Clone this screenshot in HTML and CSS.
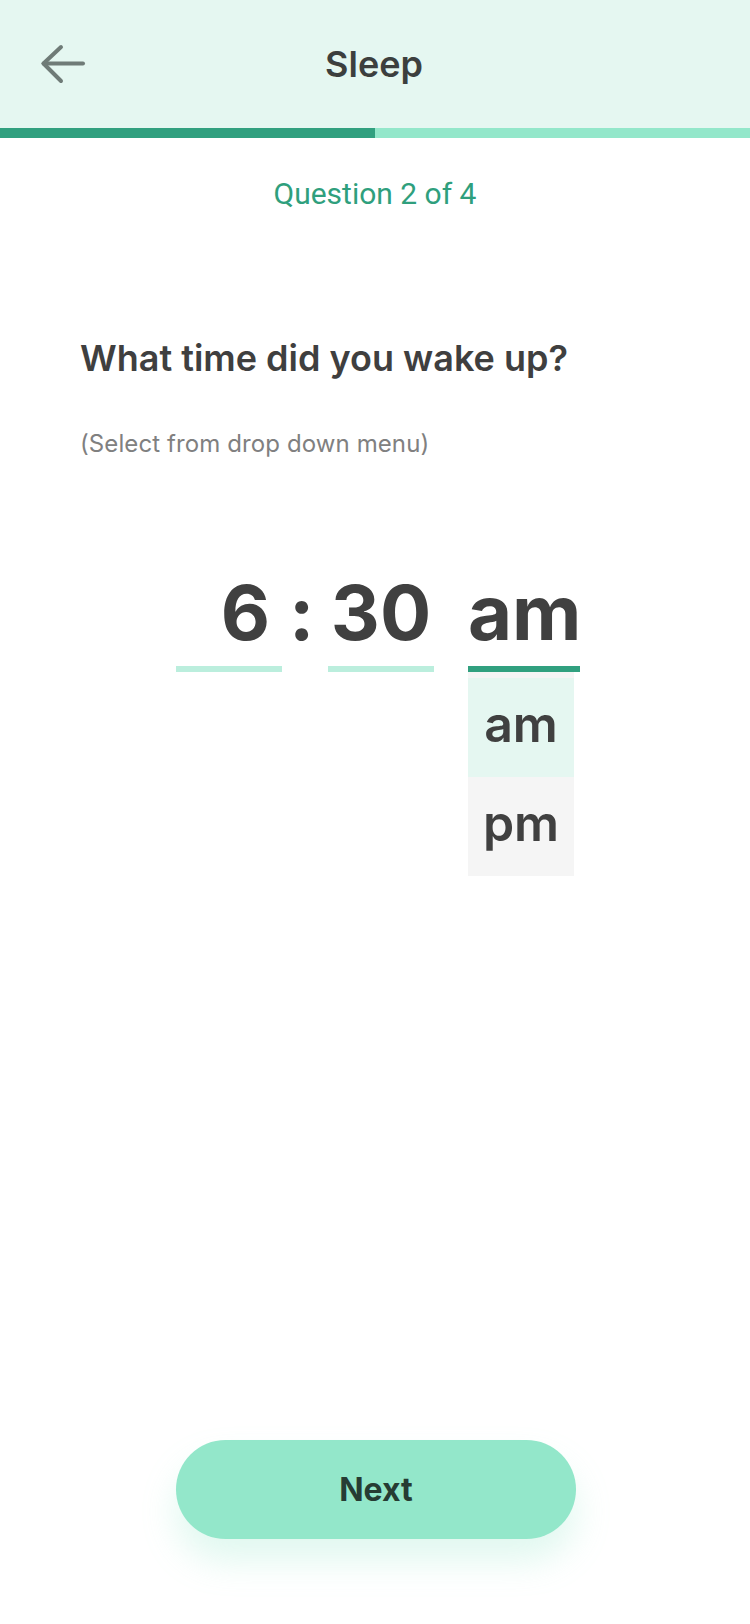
FILE: index.html
```html
<!DOCTYPE html>
<html lang="en">
<head>
<meta charset="utf-8">
<title>Sleep</title>
<link rel="stylesheet" href="styles.css">
</head>
<body>
<div class="screen">
  <header class="topbar">
    <button class="back" aria-label="Back">
      <svg width="46" height="40" viewBox="0 0 46 40" fill="none" stroke="#6f7b77" stroke-width="4" stroke-linecap="round" stroke-linejoin="round">
        <path d="M43 19.5H3.5"/>
        <path d="M21 3L3.5 19.5L21 37"/>
      </svg>
    </button>
    <h1 class="title">Sleep</h1>
    <span class="spacer"></span>
  </header>
  <div class="progress">
    <div class="progress-done"></div>
    <div class="progress-rest"></div>
  </div>

  <p class="counter">Question 2 of 4</p>

  <section class="question">
    <h2 class="q-title">What time did you wake up?</h2>
    <p class="q-hint">(Select from drop down menu)</p>
  </section>

  <div class="time-row">
    <div class="field field-hour">6</div>
    <span class="colon">:</span>
    <div class="field field-min">30</div>
    <div class="field field-ampm active">
      am
      <ul class="menu">
        <li class="opt selected">am</li>
        <li class="opt">pm</li>
      </ul>
    </div>
  </div>

  <div class="footer">
    <button class="next">Next</button>
  </div>
</div>
</body>
</html>
```

FILE: styles.css
```css
* { box-sizing: border-box; }

html, body {
  margin: 0;
  padding: 0;
  background: #ffffff;
}

body {
  font-family: Inter, "Noto Sans", "Liberation Sans", sans-serif;
  color: #3f3f3f;
}

.screen {
  display: flex;
  flex-direction: column;
  min-height: 1624px;
}

.topbar {
  height: 128px;
  background: #e5f7f1;
  display: grid;
  grid-template-columns: 1fr auto 1fr;
  align-items: center;
  padding-left: 40px;
}

.back {
  justify-self: start;
  display: flex;
  padding: 0;
  border: 0;
  background: none;
}

.title {
  margin: 0;
  font-size: 36px;
  line-height: 36px;
  font-weight: 600;
  color: #3c3f3e;
  position: relative;
  left: -21px;
}

.progress {
  display: flex;
  height: 10px;
}

.progress-done {
  flex: 1;
  background: #31a07f;
}

.progress-rest {
  flex: 1;
  background: #93e7ca;
}

.counter {
  margin: 41px 0 0;
  text-align: center;
  font-family: Roboto, Inter, "Liberation Sans", sans-serif;
  font-size: 30px;
  line-height: 30px;
  color: #2f9f7d;
}

.question {
  padding: 0 80px;
  margin-top: 131px;
}

.q-title {
  margin: 0;
  font-size: 36px;
  line-height: 36px;
  font-weight: 600;
  color: #3f3f3f;
}

.q-hint {
  margin: 56px 0 0;
  font-size: 24px;
  line-height: 24px;
  color: #808080;
  letter-spacing: 0.1px;
}

.time-row {
  display: flex;
  align-items: flex-start;
  padding-left: 176px;
  margin-top: 118px;
  font-size: 76px;
  line-height: 76px;
  font-weight: 700;
  color: #404040;
}

.field {
  position: relative;
  padding-bottom: 16px;
  border-bottom: 6px solid #bbeedd;
  text-align: center;
}

.field-hour {
  width: 106px;
  text-align: right;
  padding-right: 12px;
}

.colon {
  width: 46px;
  padding-left: 7px;
}

.field-min {
  width: 106px;
  margin-right: 34px;
}

.field-ampm {
  width: 112px;
  white-space: nowrap;
}

.field.active {
  border-bottom-color: #31a07f;
}

.menu {
  position: absolute;
  left: 0;
  top: 100%;
  margin: 6px 0 0;
  padding: 6px 0 0;
  list-style: none;
  width: 106px;
  background: #f5f5f5;
}

.opt {
  height: 99px;
  line-height: 92px;
  padding-bottom: 7px;
  font-size: 50px;
  font-weight: 600;
  text-align: center;
  color: #404040;
}

.opt.selected {
  background: #e5f7f1;
}

.footer {
  margin-top: auto;
  display: flex;
  justify-content: center;
  padding: 0 0 85px 2px;
}

.next {
  width: 400px;
  height: 99px;
  border: 0;
  border-radius: 50px;
  background: #93e7ca;
  box-shadow: 0 22px 34px rgba(147, 231, 202, 0.28);
  font-family: Inter, "Noto Sans", "Liberation Sans", sans-serif;
  font-size: 32px;
  font-weight: 700;
  color: #263c33;
}
```
